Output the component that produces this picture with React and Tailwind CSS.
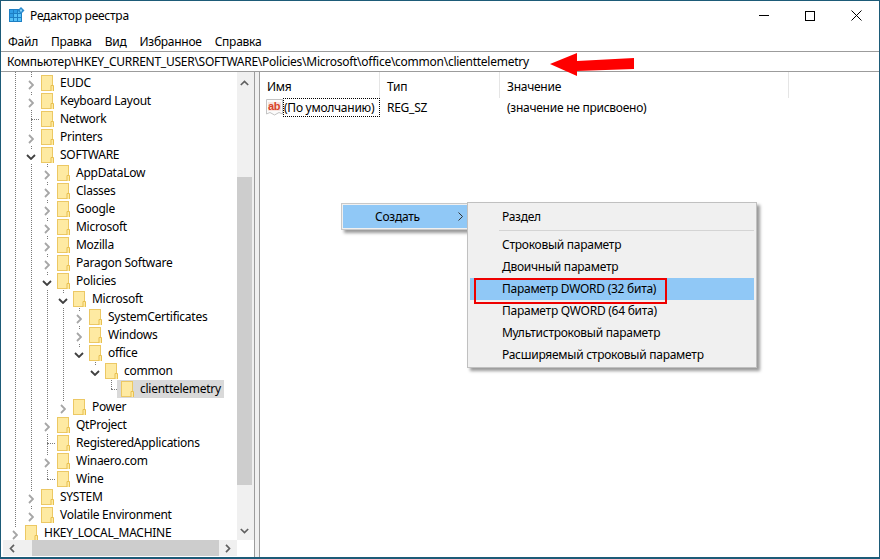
import React from 'react';

const ROW_H = 18;

// folder left = 25 + depth * 16
const rows = [
  { name: 'EUDC', depth: 1, exp: 'closed' },
  { name: 'Keyboard Layout', depth: 1, exp: 'closed' },
  { name: 'Network', depth: 1, exp: 'leaf' },
  { name: 'Printers', depth: 1, exp: 'closed' },
  { name: 'SOFTWARE', depth: 1, exp: 'open' },
  { name: 'AppDataLow', depth: 2, exp: 'closed' },
  { name: 'Classes', depth: 2, exp: 'closed' },
  { name: 'Google', depth: 2, exp: 'closed' },
  { name: 'Microsoft', depth: 2, exp: 'closed' },
  { name: 'Mozilla', depth: 2, exp: 'closed' },
  { name: 'Paragon Software', depth: 2, exp: 'closed' },
  { name: 'Policies', depth: 2, exp: 'open' },
  { name: 'Microsoft', depth: 3, exp: 'open' },
  { name: 'SystemCertificates', depth: 4, exp: 'closed' },
  { name: 'Windows', depth: 4, exp: 'closed' },
  { name: 'office', depth: 4, exp: 'open' },
  { name: 'common', depth: 5, exp: 'open' },
  { name: 'clienttelemetry', depth: 6, exp: 'leaf', selected: true },
  { name: 'Power', depth: 3, exp: 'closed' },
  { name: 'QtProject', depth: 2, exp: 'closed' },
  { name: 'RegisteredApplications', depth: 2, exp: 'leaf' },
  { name: 'Winaero.com', depth: 2, exp: 'closed' },
  { name: 'Wine', depth: 2, exp: 'leaf' },
  { name: 'SYSTEM', depth: 1, exp: 'closed' },
  { name: 'Volatile Environment', depth: 1, exp: 'closed' },
  { name: 'HKEY_LOCAL_MACHINE', depth: 0, exp: 'closed' },
];

// dotted tree guides: x, first row, last row (row centre)
const guides = [
  { x: 15, from: -1, to: 25 },
  { x: 31, from: -1, to: 24 },
  { x: 47, from: 4, to: 22 },
  { x: 63, from: 11, to: 18 },
  { x: 79, from: 12, to: 15 },
  { x: 95, from: 15, to: 16 },
  { x: 111, from: 16, to: 17 },
];

const menuItems = [
  'Строковый параметр',
  'Двоичный параметр',
  'Параметр DWORD (32 бита)',
  'Параметр QWORD (64 бита)',
  'Мультистроковый параметр',
  'Расширяемый строковый параметр',
];

const Folder = () => (
  <svg width="13" height="16" viewBox="0 0 13 16" className="shrink-0">
    <rect x="0.5" y="0.5" width="11" height="15" fill="#feeaa2" stroke="#ecc864" />
    <path d="M10 16V10.5H12.5V16" fill="#feeaa2" stroke="#e8c050" />
  </svg>
);

const Expander = ({ type }) => (
  <div className="absolute top-[4px] left-[-17px] w-[13px] h-[13px] bg-white flex items-center justify-center">
    {type === 'closed' ? (
      <svg width="6" height="10" viewBox="0 0 6 10">
        <path d="M1 1L5 5L1 9" fill="none" stroke="#a6a6a6" strokeWidth="1.8" />
      </svg>
    ) : (
      <svg width="10" height="6" viewBox="0 0 10 6">
        <path d="M1 1L5 5L9 1" fill="none" stroke="#404040" strokeWidth="1.8" />
      </svg>
    )}
  </div>
);

const TreeRow = ({ row }) => (
  <div className="h-[18px] shrink-0 flex items-center" style={{ paddingLeft: 24 + row.depth * 16 }}>
    <div className={`relative h-[18px] flex items-center ${row.selected ? 'bg-[#d9d9d9] ml-[-4px] pl-[4px] pr-[3px]' : ''}`}>
      {row.exp === 'leaf' ? (
        <div className={row.selected
          ? 'absolute top-[9px] left-[-6px] w-[6px] border-t border-dotted border-[#7a7a7a]'
          : 'absolute top-[9px] left-[-10px] w-[8px] border-t border-dotted border-[#7a7a7a]'} />
      ) : (
        <Expander type={row.exp} />
      )}
      <div className="h-[18px] pt-[1px]">
        <Folder />
      </div>
      <span className="ml-[6px] leading-[18px]">{row.name}</span>
    </div>
  </div>
);

const RegIcon = () => (
  <svg width="17" height="17" viewBox="0 0 17 17">
    <rect x="0" y="2" width="13" height="13" fill="#1d7fc4" />
    {[0, 1, 2].map((r) =>
      [0, 1, 2].map((c) => (
        <rect key={`${r}-${c}`} x={1 + c * 4} y={3 + r * 4} width="3" height="3" fill={r + c < 2 ? '#2f9ee6' : '#55c1f7'} />
      ))
    )}
    <path d="M12 0L15.5 3.5L12 7L8.5 3.5Z" fill="#2b8ccf" />
    <rect x="11" y="2.5" width="2" height="2" fill="#8fd3f8" />
  </svg>
);

const ArrowV = ({ up }) => (
  <svg width="9" height="6" viewBox="0 0 9 6">
    <path d={up ? 'M0.8 5L4.5 1.5L8.2 5' : 'M0.8 1L4.5 4.5L8.2 1'} fill="none" stroke="#606060" strokeWidth="1.7" />
  </svg>
);

const ArrowH = ({ left }) => (
  <svg width="6" height="9" viewBox="0 0 6 9">
    <path d={left ? 'M5 0.8L1.5 4.5L5 8.2' : 'M1 0.8L4.5 4.5L1 8.2'} fill="none" stroke="#606060" strokeWidth="1.7" />
  </svg>
);

const AbIcon = () => (
  <svg width="17" height="17" viewBox="0 0 17 17" className="shrink-0">
    <path d="M0.5 0.5H16.5V15L13 13.5L8.5 16L4 13.5L0.5 15Z" fill="#fbfbfb" stroke="#c4c4c4" />
    <rect x="2" y="3" width="13" height="9" fill="#f7e4df" />
    <text x="2" y="11" fontSize="11" fontWeight="700" fill="#d8432a" fontFamily="Liberation Sans, sans-serif">ab</text>
  </svg>
);

export default function App() {
  return (
    <div className="relative w-[880px] h-[559px] flex flex-col overflow-hidden bg-white text-black text-[12px] tracking-[-0.26px] font-['Noto_Sans',sans-serif] border-t border-x border-b-2 border-[#1d5b78]">
      {/* title bar */}
      <div className="h-[29px] shrink-0 flex items-center">
        <div className="ml-[8px] w-[17px] h-[17px]"><RegIcon /></div>
        <span className="ml-[4px] pt-[1px]">Редактор реестра</span>
        <div className="ml-auto flex items-center">
          <div className="w-[46px] flex justify-center"><div className="w-[10px] border-t border-black" /></div>
          <div className="w-[46px] flex justify-center"><div className="w-[10px] h-[10px] border border-black" /></div>
          <div className="w-[46px] flex justify-center">
            <svg width="11" height="11" viewBox="0 0 11 11"><path d="M0.5 0.5L10.5 10.5M10.5 0.5L0.5 10.5" stroke="#000" /></svg>
          </div>
        </div>
      </div>

      {/* menu */}
      <div className="h-[21px] shrink-0 flex items-center pl-[7px] pt-[2px] gap-[13px]">
        <span>Файл</span>
        <span>Правка</span>
        <span>Вид</span>
        <span>Избранное</span>
        <span>Справка</span>
      </div>

      {/* address */}
      <div className="h-[21px] shrink-0 flex items-center pl-[6px] pt-[1px] border-y border-[#9c9c9c]">
        Компьютер\HKEY_CURRENT_USER\SOFTWARE\Policies\Microsoft\office\common\clienttelemetry
      </div>

      <div className="flex-1 min-h-0 flex">
        {/* tree pane */}
        <div className="w-[253px] shrink-0 flex flex-col pb-[1px]">
          <div className="flex-1 min-h-0 flex">
            <div className="relative flex-1 min-w-0 overflow-hidden flex flex-col pt-[2px]">
              {guides.map((g) => (
                <div
                  key={g.x}
                  className="absolute border-l border-dotted border-[#7a7a7a]"
                  style={{ left: g.x - 1, top: g.from < 0 ? 0 : 11 + g.from * ROW_H, height: g.from < 0 ? 11 + g.to * ROW_H : (g.to - g.from) * ROW_H }}
                />
              ))}
              <div className="relative flex flex-col">
                {rows.map((r, i) => <TreeRow key={i} row={r} />)}
              </div>
            </div>
            <div className="w-[17px] shrink-0 bg-[#f0f0f0] flex flex-col">
              <div className="h-[22px] mr-[2px] flex items-center justify-center"><ArrowV up /></div>
              <div className="h-[83px]" />
              <div className="h-[308px] mr-[2px] bg-[#cdcdcd]" />
              <div className="flex-1" />
              <div className="h-[18px] mr-[2px] flex items-center justify-center"><ArrowV /></div>
            </div>
          </div>
          <div className="h-[16px] shrink-0 bg-[#f0f0f0] flex items-center ml-[2px] mr-[17px]">
            <div className="w-[17px] flex justify-center"><ArrowH left /></div>
            <div className="ml-[12px] w-[187px] h-[16px] bg-[#cdcdcd]" />
            <div className="flex-1 flex justify-center"><ArrowH /></div>
          </div>
        </div>

        {/* splitter */}
        <div className="w-[6px] shrink-0 bg-[#f0f0f0] border-x border-[#9c9c9c]" />

        {/* values pane */}
        <div className="flex-1 min-w-0 flex flex-col">
          <div className="h-[26px] shrink-0 flex items-center">
            <div className="w-[120px] h-full pl-[7px] pt-[3px] flex items-center border-r border-[#e5e5e5]">Имя</div>
            <div className="w-[120px] h-full pl-[7px] pt-[3px] flex items-center border-r border-[#e5e5e5]">Тип</div>
            <div className="w-[289px] h-full pl-[7px] pt-[3px] flex items-center border-r border-[#e5e5e5]">Значение</div>
          </div>
          <div className="h-[19px] shrink-0 flex items-center">
            <div className="w-[120px] flex items-center pl-[6px]">
              <AbIcon />
              <span className="border border-dotted border-black h-[19px] leading-[17px] w-[98px]">(По умолчанию)</span>
            </div>
            <div className="w-[120px] pl-[7px]">REG_SZ</div>
            <div className="pl-[7px]">(значение не присвоено)</div>
          </div>
        </div>
      </div>

      {/* red arrow annotation */}
      <svg className="absolute left-[545px] top-[48px]" width="95" height="32" viewBox="0 0 95 32">
        <path d="M4 15L31 4V12L88 9V20L31 22V27Z" fill="#fe0000" />
      </svg>

      {/* context menu */}
      <div className="absolute left-[340px] top-[202px] w-[128px] h-[27px] pl-[1px] pt-[1px] pb-[1px] bg-[#f0f0f0] border border-[#c8c8c8] shadow-[3px_3px_3px_rgba(0,0,0,0.4)]">
        <div className="h-full bg-[#90c8f6] flex items-center pl-[32px] relative">
          Создать
          <svg className="absolute right-[5px] top-[7px]" width="5" height="9" viewBox="0 0 5 9">
            <path d="M0.5 0.5L4.5 4.5L0.5 8.5" fill="none" stroke="#333" />
          </svg>
        </div>
      </div>

      <div className="absolute left-[466px] top-[201px] w-[290px] h-[166px] py-[2px] pl-[2px] pr-[2px] bg-[#f0f0f0] border border-[#c0c0c0] shadow-[3px_3px_3px_rgba(0,0,0,0.4)] flex flex-col">
        <div className="h-[24px] shrink-0 flex items-center pl-[32px]">Раздел</div>
        <div className="ml-[29px] mb-[3px] mt-[1px] border-t border-[#d4d4d4]" />
        {menuItems.map((t, i) => (
          <div key={t} className={`h-[22px] shrink-0 flex items-center pl-[32px] relative ${i === 2 ? 'bg-[#90c8f6]' : ''}`}>
            {t}
            {i === 2 && <div className="absolute left-[4px] top-0 w-[193px] h-[26px] border-2 border-[#ee0000]" />}
          </div>
        ))}
      </div>
    </div>
  );
}
